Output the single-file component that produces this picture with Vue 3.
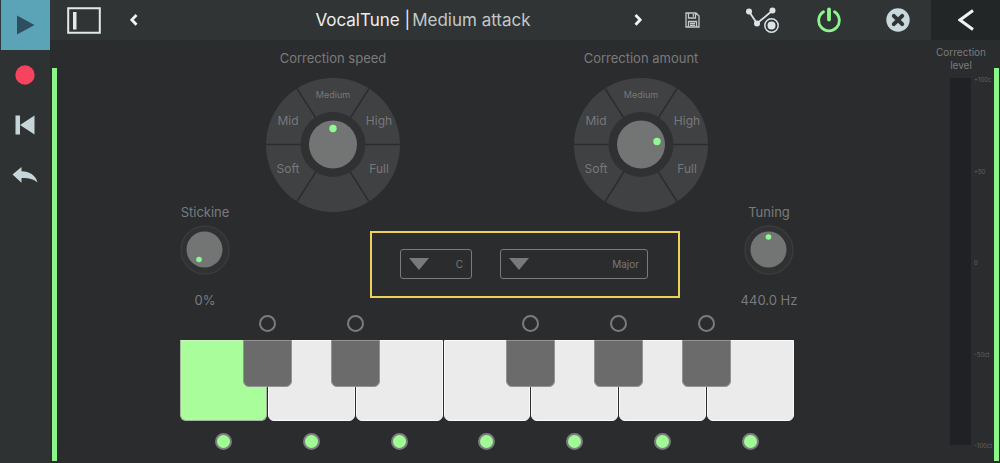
<script setup>
import { ref, reactive } from 'vue'

const dials = reactive([
  { id: 'speed', label: 'Correction speed', value: 50, dx: 0, dy: -16 },
  { id: 'amount', label: 'Correction amount', value: 75, dx: 16, dy: -3 },
])

const segments = [
  { text: 'Mid', x: 22, y: 47, size: 12 },
  { text: 'Medium', x: 67, y: 20, size: 9 },
  { text: 'High', x: 113, y: 47, size: 12 },
  { text: 'Soft', x: 22, y: 95, size: 12 },
  { text: 'Full', x: 113, y: 95, size: 12 },
]

const root = ref('C')
const scale = ref('Major')
const stick = ref(0)
const tuning = ref(440)

const whiteKeys = ['C', 'D', 'E', 'F', 'G', 'A', 'B']
const whiteOn = reactive(whiteKeys.map(() => true))

const blackKeys = [
  { name: 'C#', column: 1 },
  { name: 'D#', column: 2 },
  { name: 'F#', column: 4 },
  { name: 'G#', column: 5 },
  { name: 'A#', column: 6 },
]
const blackOn = reactive(blackKeys.map(() => false))

const ticks = ['+100c', '+50', '0', '-50ct', '-100ct']
</script>

<template>
  <div class="app">
    <nav class="transport" aria-label="Transport">
      <button class="play" aria-label="Play">
        <svg width="18" height="20" viewBox="0 0 18 20"><path d="M0 0.5 17.5 10 0 19.5z" fill="#2f4e5e" /></svg>
      </button>
      <button aria-label="Record">
        <svg width="20" height="20" viewBox="0 0 20 20"><circle cx="10" cy="10" r="9.7" fill="#f8435f" /></svg>
      </button>
      <button aria-label="Rewind">
        <svg width="20" height="20" viewBox="0 0 20 20" fill="#c5d5da"><path d="M0.5 0.5h4.5v19H0.5zM19.500 0.500v19L5 10z" /></svg>
      </button>
      <button aria-label="Undo">
        <svg width="26" height="18" viewBox="0 0 26 18"><path d="M0.500 8.500 9.500 1v4.300C17.500 5.500 23.500 9 25.500 16.500 21 12.500 15.500 11.800 9.500 12v4.800z" fill="#c5d5da" /></svg>
      </button>
    </nav>

    <div class="panel">
      <header class="bar">
        <button class="w-panel" aria-label="Toggle panel">
          <svg width="34" height="27" viewBox="0 0 34 27"><path d="M1.200 1.200h31.600v24.600H1.200z" fill="none" stroke="#e3e9ea" stroke-width="2" /><path d="M6 5h3.500v17.500H6z" fill="#e3e9ea" /></svg>
        </button>
        <button class="w-step" aria-label="Previous preset">
          <svg width="8" height="13" viewBox="0 0 8 13"><path d="M6.500 1 1.800 5.800 6.500 10.800" fill="none" stroke="#f2f5f5" stroke-width="2.800" /></svg>
        </button>
        <h1>VocalTune |<span>Medium attack</span></h1>
        <button class="w-step" aria-label="Next preset">
          <svg width="8" height="13" viewBox="0 0 8 13"><path d="M1.500 1 6.200 5.800 1.500 10.800" fill="none" stroke="#f2f5f5" stroke-width="2.800" /></svg>
        </button>
        <button class="w-save" aria-label="Save preset">
          <svg width="15" height="16" viewBox="0 0 15 16" fill="none" stroke="#c3c7c8" stroke-width="1.300"><path d="M1 1h10l3 3v11H1zM3.500 1v5h7V1M3.500 15V9.500h8V15M5 11.500h5M5 13.300h5M8.300 2v2.800" /></svg>
        </button>
        <button class="w-auto" aria-label="Automation">
          <svg width="34" height="26" viewBox="0 0 34 26"><path d="M4 4.500 12 16.500 27.500 3.500" fill="none" stroke="#dbe5e8" stroke-width="1.800" /><g fill="#dbe5e8"><circle cx="4" cy="4.500" r="3" /><circle cx="12" cy="16.500" r="3" /><circle cx="27.500" cy="3.500" r="3" /></g><circle cx="26.500" cy="18.500" r="6.700" fill="#303435" stroke="#dbe5e8" stroke-width="1.500" /><circle cx="26.500" cy="18.500" r="4" fill="#dbe5e8" /></svg>
        </button>
        <button class="w-power" aria-label="Power">
          <svg width="24" height="26" viewBox="0 0 24 26" fill="none" stroke="#8cf58c" stroke-linecap="round"><path d="M6.500 4.800A10.300 10.300 0 1 0 17.500 4.800" stroke-width="2.800" /><path d="M12 2.500v10" stroke-width="3.800" /></svg>
        </button>
        <button class="w-close" aria-label="Close">
          <svg width="24" height="24" viewBox="0 0 24 24"><circle cx="12" cy="12" r="11.700" fill="#c9d8dd" /><path d="M7.800 7.800l8.400 8.400M16.200 7.800l-8.400 8.400" stroke="#303435" stroke-width="4" stroke-linecap="round" /></svg>
        </button>
        <button class="w-back" aria-label="Back">
          <svg width="16" height="22" viewBox="0 0 16 22"><path d="M15 1.500 2 11l13 9.500" fill="none" stroke="#eef2f3" stroke-width="3" /></svg>
        </button>
      </header>

      <main class="body">
        <div class="level left"></div>

        <section class="stage">
          <div class="dials">
            <label v-for="d in dials" :key="d.id" class="dial">
              <span>{{ d.label }}</span>
              <span class="face">
                <svg viewBox="0 0 134 134" aria-hidden="true">
                  <circle cx="67" cy="67" r="67" fill="#404143" />
                  <path d="M0 66.500h134M31 10.500l72 113M103 10.500l-72 113" stroke="#2b2c2e" stroke-width="1.400" />
                  <circle cx="67" cy="66.500" r="32.500" fill="#303133" />
                  <circle cx="67" cy="66.500" r="24" fill="#737474" />
                  <circle :cx="67 + d.dx" :cy="66.5 + d.dy" r="3.700" fill="#92f992" />
                  <text v-for="s in segments" :key="s.text" :x="s.x" :y="s.y" :font-size="s.size" text-anchor="middle" fill="#77787a">{{ s.text }}</text>
                </svg>
                <input v-model="d.value" type="range" min="0" max="100" />
              </span>
            </label>
          </div>

          <div class="middle">
            <label class="knob">
              <span>Stickine</span>
              <span class="face">
                <svg viewBox="0 0 50 50" aria-hidden="true">
                  <circle cx="25" cy="25" r="24" fill="#303133" stroke="#3a3b3d" stroke-width="1.500" />
                  <circle cx="24.500" cy="24.500" r="18" fill="#737474" />
                  <circle cx="19" cy="34.500" r="2.800" fill="#92f992" />
                </svg>
                <input v-model="stick" type="range" min="0" max="100" />
              </span>
              <output>{{ stick }}%</output>
            </label>

            <div class="key-box">
              <div class="pick root">
                <svg width="20" height="12" viewBox="0 0 20 12" aria-hidden="true"><path d="M0 0h20L10 12z" fill="#797a7b" /></svg>
                <select v-model="root" aria-label="Root note">
                  <option v-for="k in whiteKeys" :key="k">{{ k }}</option>
                </select>
              </div>
              <div class="pick scale">
                <svg width="20" height="12" viewBox="0 0 20 12" aria-hidden="true"><path d="M0 0h20L10 12z" fill="#797a7b" /></svg>
                <select v-model="scale" aria-label="Scale">
                  <option>Major</option>
                  <option>Minor</option>
                </select>
              </div>
            </div>

            <label class="knob">
              <span>Tuning</span>
              <span class="face">
                <svg viewBox="0 0 50 50" aria-hidden="true">
                  <circle cx="25" cy="25" r="24" fill="#303133" stroke="#3a3b3d" stroke-width="1.500" />
                  <circle cx="24.500" cy="24.500" r="18" fill="#737474" />
                  <circle cx="24.500" cy="12" r="2.800" fill="#92f992" />
                </svg>
                <input v-model="tuning" type="range" min="420" max="460" />
              </span>
              <output>{{ Number(tuning).toFixed(1) }} Hz</output>
            </label>
          </div>

          <div class="between upper">
            <input v-for="(k, i) in blackKeys" :key="k.name" v-model="blackOn[i]" type="checkbox" :aria-label="'Allow ' + k.name" :class="'c' + k.column" />
          </div>
          <div class="keys">
            <button v-for="k in whiteKeys" :key="k" class="white" :class="{ active: k === root }" :aria-label="k"></button>
            <div class="between blacks">
              <button v-for="k in blackKeys" :key="k.name" class="black" :class="'c' + k.column" :aria-label="k.name"></button>
            </div>
          </div>
          <div class="lower">
            <input v-for="(k, i) in whiteKeys" :key="k" v-model="whiteOn[i]" type="checkbox" :aria-label="'Allow ' + k" />
          </div>
        </section>

        <aside class="meter">
          <h2>Correction level</h2>
          <div class="meter-row">
            <div class="track"></div>
            <div class="ticks"><span v-for="t in ticks" :key="t">{{ t }}</span></div>
          </div>
        </aside>

        <div class="level right"></div>
      </main>
    </div>
  </div>
</template>

<style>
body {
  margin: 0;
  background: #2b2c2e;
}
</style>

<style scoped>
.app {
  display: grid;
  grid-template-columns: 50px minmax(0, 1fr);
  min-height: 100vh;
  background: #2b2c2e;
  color: #7a7b7d;
  font-family: Inter, "Liberation Sans", sans-serif;
  font-size: 13px;
  line-height: 16px;
}
button {
  display: flex;
  align-items: center;
  justify-content: center;
  padding: 0;
  border: 0;
  background: none;
}
svg {
  display: block;
  flex: none;
}
.transport {
  background: #2f3233;
}
.transport button {
  width: 50px;
  height: 50px;
}
.transport .play {
  border-left: 1px solid #2b3a40;
  background: #5ba4b8;
}
.panel {
  display: flex;
  flex-direction: column;
}
.bar {
  display: flex;
  height: 40px;
  background: #303435;
}
.w-panel { width: 68px; }
.w-step { width: 32px; }
.w-save { width: 76px; }
.w-auto { width: 64px; }
.w-power { width: 70px; }
.w-close { width: 67px; }
.w-back {
  width: 69px;
  background: #222627;
}
h1 {
  flex: 1;
  margin: 0 0 0 74px;
  color: #eceeee;
  font-size: 17px;
  font-weight: 400;
  line-height: 40px;
  text-align: center;
  white-space: nowrap;
}
h1 span {
  margin-left: 2px;
  color: #c4c7c8;
}
.body {
  display: flex;
  flex: 1;
}
.level {
  flex: none;
  width: 5px;
  background: #8bf58b;
}
.level.left { margin: 28px 0 2px 2px; }
.level.right { margin: 28px 1px 2px; }
.stage {
  flex: 1;
  padding: 10px 123px 0;
}
.dials {
  display: flex;
  justify-content: center;
  gap: 174px;
}
.dial {
  display: flex;
  flex-direction: column;
  align-items: center;
  gap: 12px;
  width: 134px;
  white-space: nowrap;
}
.face {
  position: relative;
  display: block;
  width: 100%;
}
.face input {
  position: absolute;
  inset: 0;
  width: 100%;
  height: 100%;
  margin: 0;
  opacity: 0;
}
.middle {
  display: flex;
  align-items: flex-start;
  margin-top: -8px;
}
.knob {
  display: flex;
  flex-direction: column;
  align-items: center;
  gap: 5px;
  width: 50px;
  white-space: nowrap;
}
.knob output {
  margin-top: 12px;
}
.key-box {
  display: flex;
  gap: 28px;
  box-sizing: border-box;
  width: 310px;
  margin: 27px 64px 0 auto;
  padding: 16px 28px 17px;
  border: 2px solid #ecd25c;
}
.pick {
  display: grid;
  align-items: center;
}
.pick svg,
.pick select {
  grid-area: 1 / 1;
}
.pick svg {
  margin-left: 9px;
  pointer-events: none;
}
.root { width: 72px; }
.scale { width: 148px; }
select {
  appearance: none;
  box-sizing: border-box;
  width: 100%;
  height: 30px;
  padding: 0 8px;
  border: 1px solid #7b7c7e;
  border-radius: 3px;
  background: none;
  color: #77787a;
  font: 10px Inter, "Liberation Sans", sans-serif;
  text-align: right;
  text-align-last: right;
}
.between {
  display: grid;
  grid-template-columns: repeat(6, 1fr);
  justify-items: center;
  padding: 0 calc(100% / 14);
}
.c1 { grid-column: 1; }
.c2 { grid-column: 2; }
.c4 { grid-column: 4; }
.c5 { grid-column: 5; }
.c6 { grid-column: 6; }
input[type="checkbox"] {
  appearance: none;
  box-sizing: border-box;
  width: 17px;
  height: 17px;
  margin: 0;
  border: 2px solid #7b7c7e;
  border-radius: 50%;
}
input[type="checkbox"]:checked {
  background: #a0fb94;
}
.upper {
  margin-top: 7px;
}
.keys {
  position: relative;
  display: grid;
  grid-template-columns: repeat(7, 1fr);
  gap: 1px;
  margin-top: 8px;
}
.white {
  height: 81px;
  border: 1px solid #fafafa;
  border-radius: 0 0 6px 6px;
  background: #ebebeb;
}
.white.active {
  border-color: #a5b5a2;
  border-top-color: #c8f8c0;
  background: #aafd9b;
}
.blacks {
  position: absolute;
  inset: 0 0 auto;
}
.black {
  width: 49px;
  height: 47px;
  border: 1px solid #929292;
  border-radius: 0 0 6px 6px;
  background: #6b6b6b;
}
.lower {
  display: grid;
  grid-template-columns: repeat(7, 1fr);
  justify-items: center;
  margin-top: 12px;
}
.meter {
  display: flex;
  flex-direction: column;
  width: 76px;
}
h2 {
  margin: 6px 0 0 12px;
  font-size: 10px;
  font-weight: 400;
  line-height: 13px;
  text-align: center;
}
.meter-row {
  display: flex;
  flex: 1;
  gap: 3px;
  margin: 4px 0 13px 33px;
}
.track {
  flex: none;
  width: 21px;
  margin: 2px 0 5px;
  background: #202124;
}
.ticks {
  display: flex;
  flex-direction: column;
  justify-content: space-between;
  color: #626365;
  font-size: 6px;
  line-height: 8px;
}
</style>
